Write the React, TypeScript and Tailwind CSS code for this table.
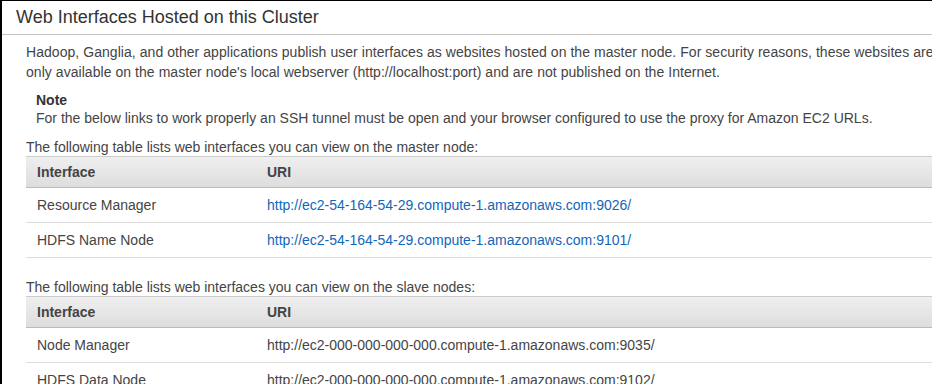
const FONT = "font-['Liberation_Sans',Arial,sans-serif]"

type Row = { name: string; uri: string; link: boolean }

const masterRows: Row[] = [
  { name: 'Resource Manager', uri: 'http://ec2-54-164-54-29.compute-1.amazonaws.com:9026/', link: true },
  { name: 'HDFS Name Node', uri: 'http://ec2-54-164-54-29.compute-1.amazonaws.com:9101/', link: true },
]

const slaveRows: Row[] = [
  { name: 'Node Manager', uri: 'http://ec2-000-000-000-000.compute-1.amazonaws.com:9035/', link: false },
  { name: 'HDFS Data Node', uri: 'http://ec2-000-000-000-000.compute-1.amazonaws.com:9102/', link: false },
]

function InterfaceTable({ rows }: { rows: Row[] }) {
  return (
    <div className="w-full">
      <div className="flex h-[32px] items-center border-y border-t-[#cccccc] border-b-[#bbbbbb] bg-gradient-to-b from-[#efefef] to-[#dddddd] text-[14px] font-bold text-[#444444]">
        <div className="w-[230px] pl-[11px]">Interface</div>
        <div className="pl-[11px]">URI</div>
      </div>
      {rows.map((row) => (
        <div
          key={row.name}
          className="flex h-[35px] items-center border-b border-[#dddddd] text-[14px] text-[#444444]"
        >
          <div className="w-[230px] pl-[11px]">{row.name}</div>
          <div className="pl-[11px]">
            {row.link ? (
              <a href="#" className="text-[#1166bb]">
                {row.uri}
              </a>
            ) : (
              row.uri
            )}
          </div>
        </div>
      ))}
    </div>
  )
}

export default function App() {
  return (
    <div className={`h-[384px] w-[932px] overflow-hidden bg-white ${FONT}`}>
      <div className="h-full w-[1100px] border-l-2 border-t border-black">
        <div className="flex h-[34px] items-center border-b border-[#c4c4c4] pl-[14px] text-[18px] text-[#333333]">
          Web Interfaces Hosted on this Cluster
        </div>
        <div className="flex flex-col pl-[24px] pt-[7px] text-[14px] text-[#444444]">
          <p className="whitespace-nowrap leading-[20px] tracking-[0.05px]">
            Hadoop, Ganglia, and other applications publish user interfaces as websites hosted on the master node. For security reasons, these websites are
            <br />
            only available on the master node's local webserver (http://localhost:port) and are not published on the Internet.
          </p>
          <div className="mt-[9px] pl-[10px] leading-[18px]">
            <div className="font-bold text-[#333333]">Note</div>
            <div className="whitespace-nowrap">
              For the below links to work properly an SSH tunnel must be open and your browser configured to use the proxy for Amazon EC2 URLs.
            </div>
          </div>
          <p className="mt-[11px] leading-[18px]">
            The following table lists web interfaces you can view on the master node:
          </p>
          <InterfaceTable rows={masterRows} />
          <p className="mt-[20px] leading-[18px]">
            The following table lists web interfaces you can view on the slave nodes:
          </p>
          <InterfaceTable rows={slaveRows} />
        </div>
      </div>
    </div>
  )
}
